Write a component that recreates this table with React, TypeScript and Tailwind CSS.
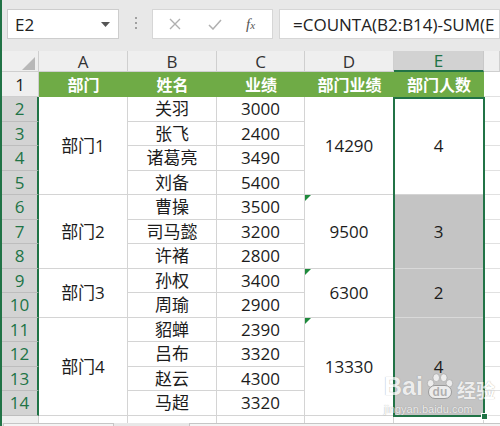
import React from "react";

const font = "font-['Open_Sans','Noto_Sans_CJK_SC',sans-serif]";

const names = ["关羽", "张飞", "诸葛亮", "刘备", "曹操", "司马懿", "许褚", "孙权", "周瑜", "貂蝉", "吕布", "赵云", "马超"];
const scores = ["3000", "2400", "3490", "5400", "3500", "3200", "2800", "3400", "2900", "2390", "3320", "4300", "3320"];

const groups = [
  { h: "h-[98px]", dept: "部门1", total: "14290", count: "4", mark: false, sel: false },
  { h: "h-[73.5px]", dept: "部门2", total: "9500", count: "3", mark: true, sel: true },
  { h: "h-[49px]", dept: "部门3", total: "6300", count: "2", mark: true, sel: true },
  { h: "h-[98px]", dept: "部门4", total: "13330", count: "4", mark: true, sel: true },
];

function ColHeader({ label, active }: { label: string; active?: boolean }) {
  return active ? (
    <div className="h-[21px] bg-[#d2d2d2] border-r border-[#c8c8c8] border-b-2 border-b-[#217346] flex items-center justify-center text-[17px] leading-none text-[#217346]">
      {label}
    </div>
  ) : (
    <div className="h-[21px] bg-[#efefef] border-r border-b border-[#cfcfcf] flex items-center justify-center text-[17px] leading-none text-[#333]">
      {label}
    </div>
  );
}

function HeadCell({ label }: { label: string }) {
  return (
    <div className="h-[25px] bg-[#6fab46] flex items-center justify-center text-[16px] font-bold leading-none text-white">
      {label}
    </div>
  );
}

function Cell({ h, children }: { h: string; children?: React.ReactNode }) {
  return (
    <div className={`${h} bg-white border-r border-b border-[#d4d4d4] flex items-center justify-center text-[17px] leading-none text-[#1c1c1c]`}>
      {children}
    </div>
  );
}

function Tail() {
  return <div className="h-[7px] bg-white border-r border-[#d4d4d4]" />;
}

export default function App() {
  const rows = Array.from({ length: 13 }, (_, i) => i + 2);
  return (
    <div className={`${font} relative w-[500px] h-[426px] overflow-hidden bg-[#e8e8e8] border-l-2 border-[#217346]`}>
      {/* formula bar */}
      <div className="h-[51px] flex items-start pt-[9px]">
        <div className="ml-[5px] w-[112px] h-[30px] bg-white border border-[#cdcdcd] flex items-center justify-between pl-[7px] pr-[8px]">
          <span className="text-[17px] leading-none text-[#222]">E2</span>
          <svg width="9" height="5" viewBox="0 0 9 5"><polygon points="0,0 9,0 4.5,5" fill="#555" /></svg>
        </div>
        <div className="ml-[16px] mt-[8px] flex flex-col gap-[3px]">
          <div className="w-[2px] h-[2px] bg-[#a0a0a0]" />
          <div className="w-[2px] h-[2px] bg-[#a0a0a0]" />
          <div className="w-[2px] h-[2px] bg-[#a0a0a0]" />
        </div>
        <div className="ml-[15px] w-[121px] h-[30px] bg-white border border-[#d6d6d6] flex items-center">
          <svg className="ml-[16px]" width="12" height="12" viewBox="0 0 12 12">
            <path d="M1 1 L11 11 M11 1 L1 11" stroke="#b0b0b0" strokeWidth="1.4" />
          </svg>
          <svg className="ml-[27px]" width="14" height="11" viewBox="0 0 14 11">
            <path d="M1 6 L5 10 L13 1" stroke="#b0b0b0" strokeWidth="1.5" fill="none" />
          </svg>
          <span className="ml-[24px] text-[15px] leading-none italic text-[#555] font-['Liberation_Serif',serif]">
            f<span className="text-[11px]">x</span>
          </span>
        </div>
        <div className="ml-[6px] flex-1 h-[30px] bg-white border border-[#d6d6d6] flex items-center pl-[13px] overflow-hidden whitespace-nowrap">
          <span className="text-[17px] leading-none text-[#222]">=COUNTA(B2:B14)-SUM(E</span>
        </div>
      </div>

      {/* sheet */}
      <div className="flex">
        {/* row headers */}
        <div className="w-[37px] flex flex-col">
          <div className="h-[21px] bg-[#efefef] border-r border-b border-[#cfcfcf] relative">
            <svg className="absolute right-[3px] bottom-[1px]" width="13" height="13" viewBox="0 0 13 13">
              <polygon points="13,0 13,13 0,13" fill="#b8b8b8" />
            </svg>
          </div>
          <div className="h-[25px] bg-[#efefef] border-r border-b border-[#cfcfcf] flex items-center justify-center text-[17px] leading-none text-[#222]">1</div>
          {rows.map((r) => (
            <div key={r} className="h-[24.5px] bg-[#d3d3d3] border-r-2 border-r-[#217346] border-b border-b-[#bdbdbd] flex items-center justify-center text-[17px] leading-none text-[#217346]">
              {r}
            </div>
          ))}
          <div className="h-[7px] bg-[#efefef] border-r border-[#cfcfcf]" />
        </div>

        {/* A */}
        <div className="w-[89px] flex flex-col">
          <ColHeader label="A" />
          <HeadCell label="部门" />
          {groups.map((g) => (
            <Cell key={g.dept} h={g.h}>{g.dept}</Cell>
          ))}
          <Tail />
        </div>

        {/* B */}
        <div className="w-[89px] flex flex-col">
          <ColHeader label="B" />
          <HeadCell label="姓名" />
          {names.map((n) => (
            <Cell key={n} h="h-[24.5px]">{n}</Cell>
          ))}
          <Tail />
        </div>

        {/* C */}
        <div className="w-[88px] flex flex-col">
          <ColHeader label="C" />
          <HeadCell label="业绩" />
          {scores.map((s, i) => (
            <Cell key={i} h="h-[24.5px]">{s}</Cell>
          ))}
          <Tail />
        </div>

        {/* D */}
        <div className="w-[89px] flex flex-col">
          <ColHeader label="D" />
          <HeadCell label="部门业绩" />
          {groups.map((g) => (
            <div key={g.total} className={`${g.h} relative bg-white border-r border-b border-[#d4d4d4] flex items-center justify-center text-[17px] leading-none text-[#1c1c1c]`}>
              {g.mark && (
                <svg className="absolute left-0 top-0" width="6" height="6" viewBox="0 0 6 6">
                  <polygon points="0,0 6,0 0,6" fill="#1e8a3c" />
                </svg>
              )}
              {g.total}
            </div>
          ))}
          <Tail />
        </div>

        {/* E */}
        <div className="w-[90px] flex flex-col">
          <ColHeader label="E" active />
          <HeadCell label="部门人数" />
          <div className="relative flex flex-col">
            {groups.map((g) => (
              <div key={g.dept} className={`${g.h} ${g.sel ? "bg-[#c4c4c4] border-b-[#d9d9d9]" : "bg-white border-b-[#d4d4d4]"} border-r border-r-[#d4d4d4] border-b flex items-center justify-center text-[17px] leading-none text-[#1c1c1c]`}>
                {g.count}
              </div>
            ))}
            <div className="absolute left-[-1px] right-[-1px] top-0 bottom-[-1px] border-2 border-[#217346] pointer-events-none" />
            <div className="absolute right-[-4px] bottom-[-4px] w-[7px] h-[7px] bg-[#217346] border border-white" />
          </div>
          <Tail />
        </div>

        {/* F */}
        <div className="flex-1 flex flex-col">
          <ColHeader label="" />
          <div className="h-[25px] bg-white border-b border-[#e1e1e1]" />
          {rows.map((r) => (
            <div key={r} className="h-[24.5px] bg-white border-b border-[#e1e1e1]" />
          ))}
          <div className="h-[7px] bg-white" />
        </div>
      </div>

      {/* bottom bar */}
      <div className="h-[4px] flex bg-[#e8e8e8]">
        <div className="ml-[1px] w-[111px] h-[4px] bg-[#f4f4f4] border-t border-x border-[#c6c6c6]" />
        <div className="ml-[75px] flex-1 h-[4px] bg-[#f4f4f4] border-t border-l border-[#c6c6c6]" />
      </div>

      {/* watermark */}
      <div className="absolute left-[382px] top-[373px] flex flex-col items-start opacity-70 pointer-events-none">
        <div className="flex items-end">
          <span className="text-[25px] leading-none font-bold text-white [text-shadow:0_0_1px_#7a7a7a] font-['Liberation_Sans',sans-serif]">Bai</span>
          <div className="relative w-[30px] h-[26px] ml-[2px]">
            <svg className="absolute left-0 top-0" width="30" height="15" viewBox="0 0 30 16">
              <ellipse cx="5" cy="11" rx="3.5" ry="4" fill="white" stroke="#8a8a8a" strokeWidth="0.6" />
              <ellipse cx="11" cy="5" rx="3.5" ry="4.2" fill="white" stroke="#8a8a8a" strokeWidth="0.6" />
              <ellipse cx="19" cy="5" rx="3.5" ry="4.2" fill="white" stroke="#8a8a8a" strokeWidth="0.6" />
              <ellipse cx="25" cy="11" rx="3.5" ry="4" fill="white" stroke="#8a8a8a" strokeWidth="0.6" />
            </svg>
            <div className="absolute left-[3px] top-[12px] w-[24px] h-[14px] rounded-[7px] bg-white border border-[#8a8a8a] flex items-center justify-center">
              <span className="text-[12px] leading-none font-bold text-[#a8a8a8] font-['Liberation_Sans',sans-serif]">du</span>
            </div>
          </div>
          <span className="ml-[2px] text-[19px] leading-none font-bold text-white [text-shadow:0_0_1px_#7a7a7a] font-['Noto_Sans_CJK_SC',sans-serif]">经验</span>
        </div>
        <span className="mt-[5px] text-[11px] leading-none text-white [text-shadow:0_0_1px_#6a6a6a] font-['Liberation_Sans',sans-serif]">jingyan.baidu.com</span>
      </div>
    </div>
  );
}
